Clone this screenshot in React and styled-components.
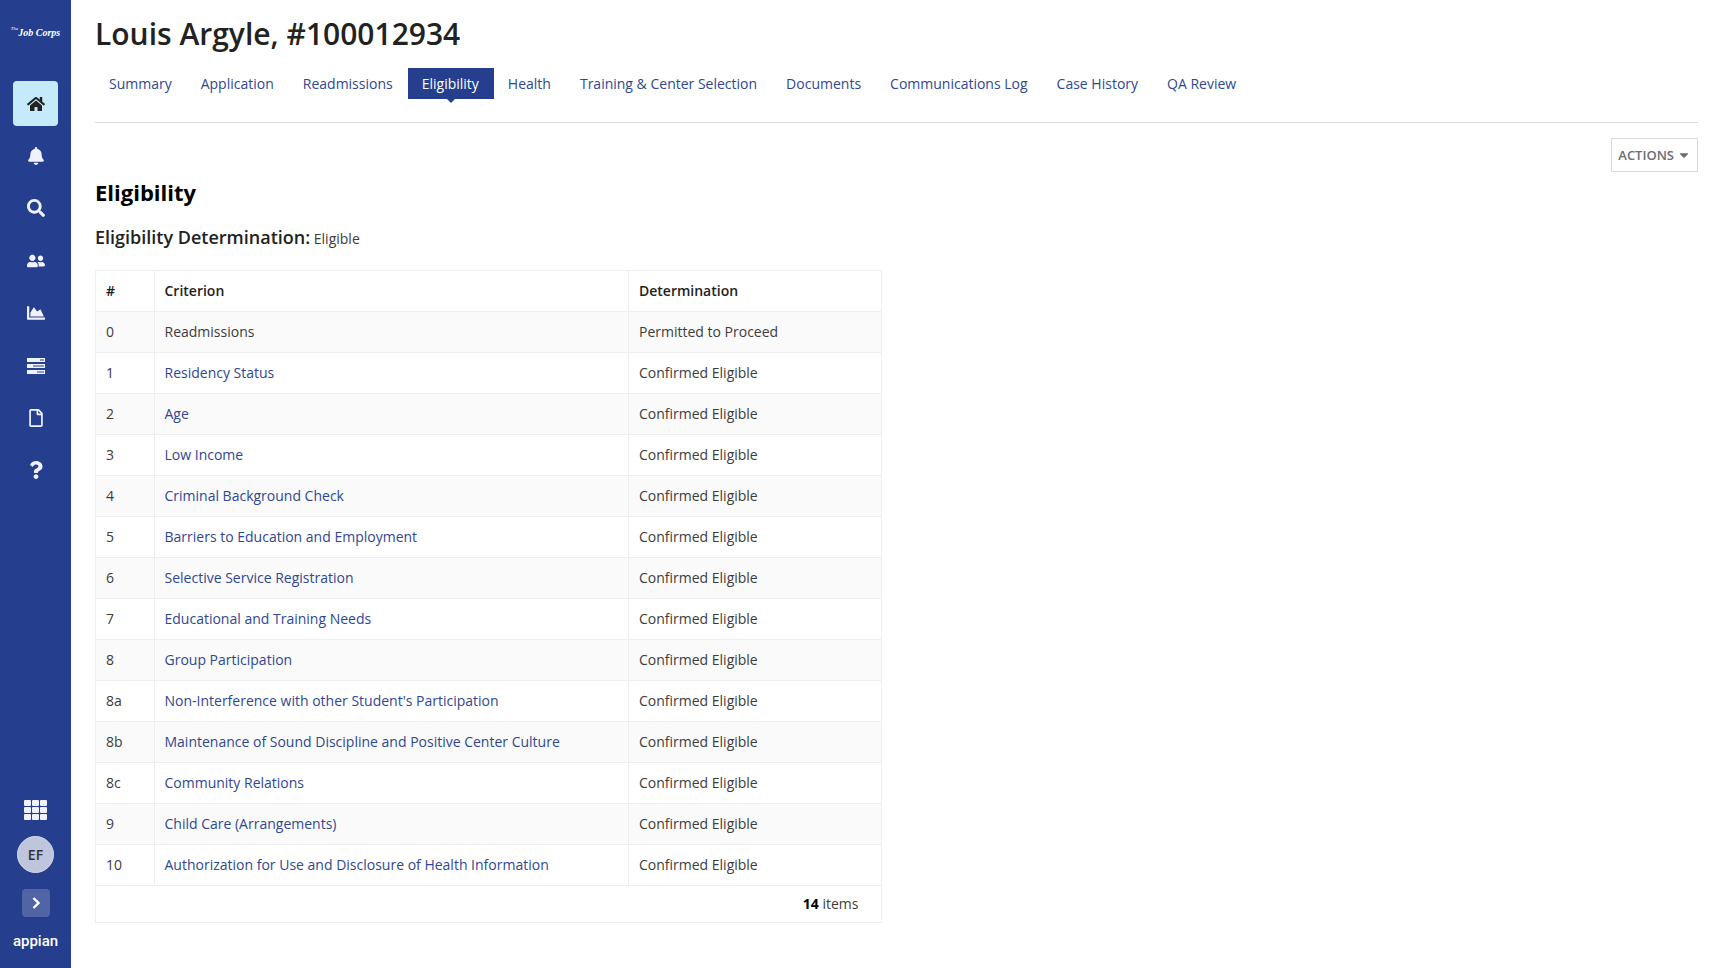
import React from "react";
import styled, { createGlobalStyle, css } from "styled-components";
import {
  FaHome,
  FaBell,
  FaSearch,
  FaUserFriends,
  FaChartArea,
  FaRegFile,
  FaQuestion,
  FaCaretDown,
} from "react-icons/fa";

const navy = "#253f8e";
const line = "#eeeef0";

const GlobalStyle = createGlobalStyle`
  *, *::before, *::after { box-sizing: border-box; }
  body {
    margin: 0;
    background: #fff;
    color: #3c3c3c;
    font-family: "Open Sans", "Noto Sans", sans-serif;
    font-size: 14px;
    line-height: 20px;
  }
  button { font: inherit; cursor: pointer; }
  a { color: #2f4792; text-decoration: none; }
`;

const Page = styled.div`
  display: flex;
  min-height: 100vh;
`;

const Sidebar = styled.aside`
  display: flex;
  flex-direction: column;
  justify-content: space-between;
  align-items: center;
  flex: none;
  width: 71px;
  padding: 21px 0 15px;
  background: ${navy};
  color: #f0f3ff;
`;

const Logo = styled.a`
  display: flex;
  align-items: flex-start;
  height: 24px;
  color: #fff;
  font-family: "Liberation Serif", serif;
  font-style: italic;
  line-height: 24px;
`;

const LogoThe = styled.span`
  font-size: 5px;
  line-height: 16px;
`;

const LogoName = styled.span`
  font-size: 10px;
  font-weight: 700;
  white-space: nowrap;
`;

const Nav = styled.nav`
  display: flex;
  flex-direction: column;
  align-items: center;
  justify-content: space-between;
  height: 412px;
  margin-top: 36px;
`;

const SideTop = styled.div`
  display: flex;
  flex-direction: column;
  align-items: center;
`;

const NavLink = styled.a`
  display: flex;
  align-items: center;
  justify-content: center;
  width: 45px;
  height: 45px;
  padding-left: 1px;
  border-radius: 4px;
  color: #f0f3ff;
  font-size: 18px;
  ${(p) =>
    p.$active &&
    css`
      background: #c5ebfb;
      color: #222;
    `}
`;

const SideBottom = styled.div`
  display: flex;
  flex-direction: column;
  align-items: center;
`;

const GridButton = styled.button`
  display: flex;
  padding: 0;
  border: 0;
  background: none;
  color: inherit;
`;

const Avatar = styled.button`
  width: 37px;
  height: 37px;
  margin-top: 16px;
  padding: 0;
  border: 1px solid #d4d9e9;
  border-radius: 50%;
  background: #bec5dd;
  color: #333;
  font-weight: 600;
`;

const Expand = styled.button`
  display: flex;
  align-items: center;
  justify-content: center;
  width: 28px;
  height: 28px;
  margin-top: 16px;
  padding: 0;
  border: 0;
  border-radius: 4px;
  background: #5165a5;
  color: #fff;
`;

const Appian = styled.span`
  margin-top: 12px;
  color: #fff;
  font-family: Roboto, "Open Sans", sans-serif;
  font-size: 15px;
  font-weight: 500;
  line-height: 24px;
`;

const Main = styled.main`
  flex: 1;
  min-width: 0;
  padding: 12px 24px 24px;
`;

const Title = styled.h1`
  margin: 0;
  color: #222;
  font-size: 30px;
  font-weight: 600;
  line-height: 44px;
`;

const Tabs = styled.nav`
  display: flex;
  flex-wrap: wrap;
  margin-top: 12px;
  padding-bottom: 23px;
  border-bottom: 1px solid #d9d9d9;
`;

const Tab = styled.a`
  position: relative;
  padding: 6px 15px 5px 14px;
  ${(p) =>
    p.$active &&
    css`
      background: ${navy};
      color: #fff;
      &::after {
        content: "";
        position: absolute;
        top: 100%;
        left: calc(50% - 4px);
        border: 4px solid transparent;
        border-top-color: ${navy};
      }
    `}
`;

const Toolbar = styled.div`
  display: flex;
  justify-content: flex-end;
  margin-top: 15px;
`;

const ActionsButton = styled.button`
  display: flex;
  align-items: center;
  gap: 3px;
  height: 34px;
  padding: 0 6px;
  border: 1px solid #d9d9d9;
  background: #fff;
  color: #6c6c75;
  font-size: 13px;
  font-weight: 600;
`;

const Heading = styled.h2`
  margin: 4px 0 0;
  color: #000;
  font-size: 22px;
  font-weight: 700;
  line-height: 32px;
`;

const Result = styled.p`
  margin: 17px 0 0;
  line-height: 24px;
`;

const ResultLabel = styled.strong`
  color: #222;
  font-size: 18px;
  font-weight: 600;
`;

const GridCard = styled.section`
  width: calc(49% + 2px);
  margin-top: 19px;
  border: 1px solid ${line};
`;

const Table = styled.table`
  width: 100%;
  border-collapse: collapse;
  table-layout: fixed;
`;

const HeadCell = styled.th`
  width: ${(p) => p.$width || "auto"};
  height: 40px;
  padding: 0 10px;
  border-left: 1px solid ${line};
  color: #222;
  font-weight: 600;
  text-align: left;
  &:first-child { border-left: 0; }
`;

const Row = styled.tr`
  &:nth-child(odd) { background: #fafafa; }
`;

const Cell = styled.td`
  height: 41px;
  padding: 0 10px;
  border: 1px solid ${line};
  border-width: 1px 0 1px 1px;
  &:first-child { border-left: 0; }
`;

const Footer = styled.footer`
  padding: 8px 23px;
  text-align: right;
`;

const Count = styled.strong`
  color: #000;
  font-weight: 700;
`;

function TasksIcon() {
  return (
    <svg width="18" height="16" viewBox="0 0 18 16" fill="currentColor" aria-hidden="true">
      <path fillRule="evenodd" d="M0 0h18v4H0zM13 1.5v1h4v-1zM0 6h18v4H0zM6 7.500v1h11v-1zM0 12h18v4H0zM10 13.500v1h7v-1z" />
    </svg>
  );
}

function AppsIcon() {
  const at = [0, 8, 16];
  return (
    <svg width="23" height="20" viewBox="0 0 23 20" fill="currentColor" aria-hidden="true">
      {at.map((x) =>
        [0, 7, 14].map((y) => <rect key={x + "-" + y} x={x} y={y} width="7" height="6" rx="1" />)
      )}
    </svg>
  );
}

function ChevronIcon() {
  return (
    <svg width="8" height="12" viewBox="0 0 8 12" fill="none" stroke="currentColor" strokeWidth="2.4" aria-hidden="true">
      <path d="M1.500 1l5 5-5 5" />
    </svg>
  );
}

const navItems = [
  ["Home", FaHome],
  ["Notifications", FaBell],
  ["Search", FaSearch],
  ["Contacts", FaUserFriends],
  ["Reports", FaChartArea],
  ["Tasks", TasksIcon],
  ["Documents", FaRegFile],
  ["Help", FaQuestion],
];

const tabs = [
  "Summary",
  "Application",
  "Readmissions",
  "Eligibility",
  "Health",
  "Training & Center Selection",
  "Documents",
  "Communications Log",
  "Case History",
  "QA Review",
];

const confirmed = "Confirmed Eligible";
const criteria = [
  ["0", "Readmissions", "Permitted to Proceed"],
  ["1", "Residency Status", confirmed],
  ["2", "Age", confirmed],
  ["3", "Low Income", confirmed],
  ["4", "Criminal Background Check", confirmed],
  ["5", "Barriers to Education and Employment", confirmed],
  ["6", "Selective Service Registration", confirmed],
  ["7", "Educational and Training Needs", confirmed],
  ["8", "Group Participation", confirmed],
  ["8a", "Non-Interference with other Student's Participation", confirmed],
  ["8b", "Maintenance of Sound Discipline and Positive Center Culture", confirmed],
  ["8c", "Community Relations", confirmed],
  ["9", "Child Care (Arrangements)", confirmed],
  ["10", "Authorization for Use and Disclosure of Health Information", confirmed],
];

export default function App() {
  return (
    <>
      <GlobalStyle />
      <Page>
        <Sidebar>
          <SideTop>
            <Logo href="#">
              <LogoThe>The</LogoThe>
              <LogoName>Job Corps</LogoName>
            </Logo>
            <Nav aria-label="Site">
              {navItems.map(([label, Icon]) => (
                <NavLink key={label} href="#" aria-label={label} $active={label === "Home"}>
                  <Icon />
                </NavLink>
              ))}
            </Nav>
          </SideTop>
          <SideBottom>
            <GridButton aria-label="Apps">
              <AppsIcon />
            </GridButton>
            <Avatar>EF</Avatar>
            <Expand aria-label="Expand navigation">
              <ChevronIcon />
            </Expand>
            <Appian>appian</Appian>
          </SideBottom>
        </Sidebar>
        <Main>
          <Title>Louis Argyle, #100012934</Title>
          <Tabs aria-label="Record">
            {tabs.map((tab) => (
              <Tab key={tab} href="#" $active={tab === "Eligibility"}>
                {tab}
              </Tab>
            ))}
          </Tabs>
          <Toolbar>
            <ActionsButton>
              ACTIONS <FaCaretDown size={14} />
            </ActionsButton>
          </Toolbar>
          <Heading>Eligibility</Heading>
          <Result>
            <ResultLabel>Eligibility Determination:</ResultLabel> Eligible
          </Result>
          <GridCard>
            <Table>
              <thead>
                <tr>
                  <HeadCell $width="58px">#</HeadCell>
                  <HeadCell>Criterion</HeadCell>
                  <HeadCell $width="253px">Determination</HeadCell>
                </tr>
              </thead>
              <tbody>
                {criteria.map(([id, name, result]) => (
                  <Row key={id}>
                    <Cell>{id}</Cell>
                    <Cell>{id === "0" ? name : <a href="#">{name}</a>}</Cell>
                    <Cell>{result}</Cell>
                  </Row>
                ))}
              </tbody>
            </Table>
            <Footer>
              <Count>14</Count> items
            </Footer>
          </GridCard>
        </Main>
      </Page>
    </>
  );
}
